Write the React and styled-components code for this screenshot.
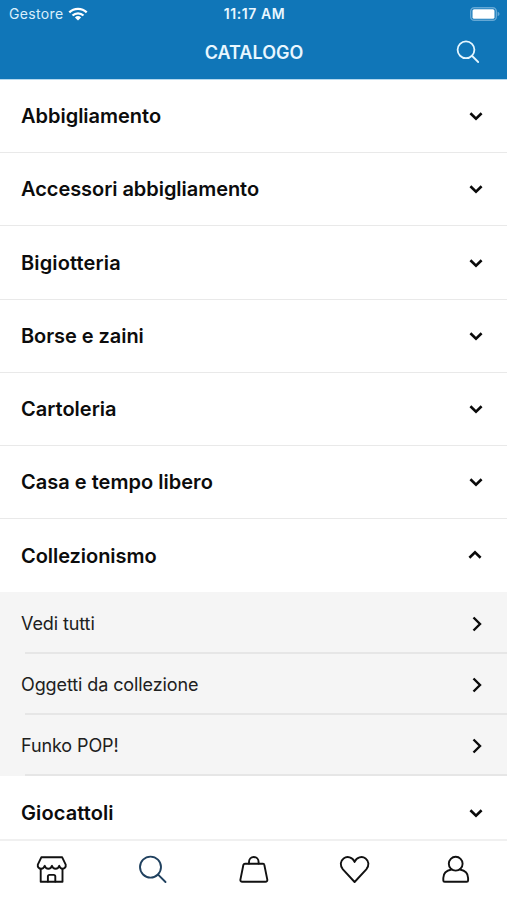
import React, { useState } from "react";
import styled, { createGlobalStyle } from "styled-components";

const categories = [
  { name: "Abbigliamento", spacing: -0.02 },
  { name: "Accessori abbigliamento", spacing: -0.05 },
  { name: "Bigiotteria", spacing: 0.13 },
  { name: "Borse e zaini", spacing: -0.06 },
  { name: "Cartoleria", spacing: 0 },
  { name: "Casa e tempo libero", spacing: 0.02 },
  {
    name: "Collezionismo",
    spacing: -0.05,
    children: ["Vedi tutti", "Oggetti da collezione", "Funko POP!"],
  },
  { name: "Giocattoli", spacing: 0.1 },
];

export default function App() {
  const [open, setOpen] = useState("Collezionismo");

  return (
    <>
      <GlobalStyle />
      <Screen>
        <Header>
          <StatusBar>
            <Carrier>
              Gestore
              <WifiIcon />
            </Carrier>
            <Clock>11:17 AM</Clock>
            <BatteryIcon />
          </StatusBar>
          <TitleBar>
            <h1>CATALOGO</h1>
            <SearchButton aria-label="Cerca">
              <svg width="24" height="24" viewBox="0 0 24 24">
                <circle cx="10" cy="9.8" r="8.4" />
                <path d="M16.2 16l6 6" />
              </svg>
            </SearchButton>
          </TitleBar>
        </Header>

        <List>
          {categories.map((item) => {
            const expanded = open === item.name;
            return (
              <React.Fragment key={item.name}>
                <Category
                  $expanded={expanded}
                  $spacing={item.spacing}
                  onClick={() => setOpen(expanded ? null : item.name)}
                >
                  {item.name}
                  <Chevron $expanded={expanded} viewBox="0 0 14 10">
                    <path d="M1.4 2.2L7 7.6l5.6-5.4" />
                  </Chevron>
                </Category>
                {expanded && item.children && (
                  <SubList>
                    {item.children.map((child) => (
                      <SubItem key={child}>
                        {child}
                        <Arrow viewBox="0 0 10 16">
                          <path d="M1.5 1.5L8 8l-6.5 6.5" />
                        </Arrow>
                      </SubItem>
                    ))}
                  </SubList>
                )}
              </React.Fragment>
            );
          })}
        </List>

        <TabBar>
          <Tab aria-label="Negozio">
            <svg viewBox="0 0 32 32">
              <path d="M6.3 3.300h20.900l3.500 7.300c.4 2.700-1.200 4.200-3 4.200-1.700 0-2.900-1-3.500-3-.5 2-1.800 3-3.600 3s-3.100-1-3.700-3c-.5 2-1.800 3-3.600 3s-3-1-3.600-3c-.6 2-1.800 3-3.500 3-2.200 0-3.800-1.700-3.400-4.200z" />
              <path d="M5.700 15v12.800h21.800V15" />
              <path d="M12.900 27.600v-5.100c0-1 .6-1.600 1.600-1.600h4.200c1 0 1.600.6 1.600 1.600v5.100" />
            </svg>
          </Tab>
          <Tab aria-label="Cerca" $active>
            <svg viewBox="0 0 32 32">
              <circle cx="14.5" cy="13.1" r="10.5" />
              <path d="M22.1 20.6l7.400 7.400" />
            </svg>
          </Tab>
          <Tab aria-label="Carrello">
            <svg viewBox="0 0 32 32">
              <path d="M7 9.700h18c.7 0 1.200.4 1.300 1l3 14.900c.2 1.300-.5 2.200-1.900 2.200H4.300c-1.400 0-2.100-.9-1.900-2.200l3-14.900c.2-.6.8-1 1.600-1z" />
              <path d="M11 9.500V8c0-2.900 2.100-5 4.800-5s4.800 2.100 4.800 5v1.500" />
            </svg>
          </Tab>
          <Tab aria-label="Preferiti">
            <svg viewBox="0 0 32 32">
              <path d="M15.600 28L3.900 15.300C.8 11.600 1.200 6.900 4.600 4.400c3.600-2.600 9-1.300 11 3.600 2-4.900 7.400-6.200 11-3.600 3.400 2.500 3.800 7.200.7 10.900z" />
            </svg>
          </Tab>
          <Tab aria-label="Profilo">
            <svg viewBox="0 0 32 32">
              <circle cx="15.700" cy="9.700" r="6.900" />
              <path d="M11.500 15.500c-5.100 1-8.200 4.300-8.200 8.500v2.400c0 .9.500 1.400 1.400 1.400h22c.9 0 1.400-.5 1.400-1.400V24c0-4.200-3.100-7.500-8.200-8.500" />
            </svg>
          </Tab>
        </TabBar>
      </Screen>
    </>
  );
}

function WifiIcon() {
  return (
    <svg width="20" height="14" viewBox="0 0 20 14">
      <g fill="none" stroke="#fff" strokeWidth="2.3">
        <path d="M1.300 5.300a12.500 12.500 0 0 1 17.400 0" />
        <path d="M4.500 8.500a8 8 0 0 1 11 0" />
      </g>
      <path d="M10 13.600l-3.100-3.200a4.500 4.500 0 0 1 6.200 0z" fill="#fff" />
    </svg>
  );
}

function BatteryIcon() {
  return (
    <svg width="30" height="14" viewBox="0 0 30 14">
      <rect x=".7" y=".7" width="25.6" height="12.6" rx="3.6" fill="none" stroke="#64a8d5" strokeWidth="1.4" />
      <rect x="2.5" y="2.2" width="22" height="9.6" rx="1.6" fill="#fff" />
      <path d="M27.600 4.800c1.300.4 1.900 1.200 1.900 2.200s-.6 1.800-1.900 2.200z" fill="#64a8d5" />
    </svg>
  );
}

const GlobalStyle = createGlobalStyle`
  * {
    box-sizing: border-box;
  }

  body {
    margin: 0;
    background-color: #fff;
    font-family: Inter, "Liberation Sans", sans-serif;
  }

  button {
    border: none;
    background: none;
    padding: 0;
    font-family: inherit;
    cursor: pointer;
  }
`;

const Screen = styled.div`
  display: flex;
  flex-direction: column;
  width: 100%;
  height: 900px;
  overflow: hidden;
  background-color: #fff;
`;

const Header = styled.header`
  flex: none;
  height: 80px;
  border-bottom: 1px solid #b4d8ee;
  background-color: #1076b8;
  color: #fff;
`;

const StatusBar = styled.div`
  display: grid;
  grid-template-columns: 1fr auto 1fr;
  align-items: center;
  height: 27px;
  padding: 0 7px 0 9px;
  font-size: 14px;

  > svg {
    justify-self: end;
  }
`;

const Carrier = styled.span`
  display: flex;
  align-items: center;
  gap: 4px;
  color: #d9effc;
  letter-spacing: 0.35px;
`;

const Clock = styled.span`
  font-weight: 600;
  letter-spacing: 0.6px;
  color: #e9f7ff;
`;

const TitleBar = styled.div`
  display: grid;
  grid-template-columns: 1fr auto 1fr;
  align-items: center;
  height: 50px;
  padding: 0 27px 0 28px;

  h1 {
    grid-column: 2;
    margin: 0;
    font-size: 18px;
    font-weight: 600;
    color: #e9f7ff;
  }
`;

const SearchButton = styled.button`
  justify-self: end;
  height: 24px;

  svg {
    display: block;
    fill: none;
    stroke: #e4f6ff;
    stroke-width: 1.8;
    stroke-linecap: round;
  }
`;

const List = styled.main`
  flex: 1;
  min-height: 0;
  overflow: hidden;
`;

const Category = styled.button`
  display: flex;
  align-items: center;
  justify-content: space-between;
  width: 100%;
  height: 73.2px;
  padding: 0.4px 24px 0 21px;
  border-bottom: ${({ $expanded }) => ($expanded ? "none" : "1px solid #e9e9e9")};
  color: #0c0c0c;
  font-size: 20px;
  font-weight: 600;
  letter-spacing: ${({ $spacing }) => $spacing}px;
`;

const Chevron = styled.svg`
  width: 14px;
  height: 10px;
  fill: none;
  stroke: #0a0a0a;
  stroke-width: 2.6;
  transform: ${({ $expanded }) => ($expanded ? "translate(-1px, -1px) rotate(180deg)" : "none")};
`;

const SubList = styled.div`
  padding-top: 1px;
  background-color: #f5f5f5;
`;

const SubItem = styled.div`
  display: flex;
  align-items: center;
  justify-content: space-between;
  height: 61px;
  padding: 0 25px 0 21px;
  background: linear-gradient(#e6e6e6, #e6e6e6) 25px 100% / 100% 2px no-repeat;
  color: #202020;
  font-size: 18px;
  letter-spacing: -0.1px;
`;

const Arrow = styled.svg`
  width: 10px;
  height: 16px;
  fill: none;
  stroke: #0a0a0a;
  stroke-width: 2.4;
`;

const TabBar = styled.nav`
  display: flex;
  flex: none;
  height: 61px;
  padding-top: 13.4px;
  border-top: 2px solid #f0f0f0;
  background-color: #fff;
`;

const Tab = styled.button`
  display: flex;
  flex: 1;
  justify-content: center;
  align-items: flex-start;

  svg {
    width: 32px;
    height: 32px;
    fill: none;
    stroke: ${({ $active }) => ($active ? "#20415f" : "#111")};
    stroke-width: 1.9;
    stroke-linecap: round;
    stroke-linejoin: round;
  }
`;
